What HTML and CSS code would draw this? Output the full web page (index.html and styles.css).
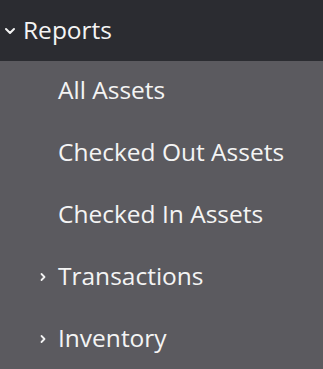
FILE: index.html
```html
<!DOCTYPE html>
<html>
<head>
<meta charset="utf-8">
<link rel="stylesheet" href="styles.css">
</head>
<body>
<nav class="menu">
  <div class="head">
    <svg class="chev" width="12" height="8" viewBox="0 0 12 8"><path d="M2 2 L6 6 L10 2" fill="none" stroke="#f2f2f2" stroke-width="2" stroke-linecap="round" stroke-linejoin="round"/></svg>
    <span>Reports</span>
  </div>
  <ul class="items">
    <li class="item"><span class="ico"></span><span>All Assets</span></li>
    <li class="item"><span class="ico"></span><span>Checked Out Assets</span></li>
    <li class="item"><span class="ico"></span><span>Checked In Assets</span></li>
    <li class="item"><span class="ico"><svg width="8" height="10" viewBox="0 0 8 10"><path d="M2.5 2 L5.5 5 L2.5 8" fill="none" stroke="#f2f2f2" stroke-width="1.8" stroke-linecap="round" stroke-linejoin="round"/></svg></span><span>Transactions</span></li>
    <li class="item"><span class="ico"><svg width="8" height="10" viewBox="0 0 8 10"><path d="M2.5 2 L5.5 5 L2.5 8" fill="none" stroke="#f2f2f2" stroke-width="1.8" stroke-linecap="round" stroke-linejoin="round"/></svg></span><span>Inventory</span></li>
  </ul>
</nav>
</body>
</html>
```
FILE: styles.css
```css
html, body { margin: 0; padding: 0; }
body { background: #5b5a5f; width: 323px; height: 369px; overflow: hidden; font-family: "Open Sans", "Noto Sans", sans-serif; color: #f4f4f4; }
.menu { display: flex; flex-direction: column; }
.head { height: 61px; box-sizing: border-box; padding-bottom: 2px; background: #2b2c31; display: flex; align-items: center; gap: 7px; padding-left: 4px; font-size: 24.5px; font-weight: 500; }
.chev { margin-top: 3px; }
.items { list-style: none; margin: 0; padding: 0; }
.item { height: 62px; box-sizing: border-box; padding-bottom: 5px; display: flex; align-items: center; font-size: 24.5px; font-weight: 500; padding-left: 37px; }
.ico { width: 21px; display: flex; align-items: center; justify-content: flex-start; padding-left: 2px; box-sizing: border-box; margin-top: 2px; }
```
